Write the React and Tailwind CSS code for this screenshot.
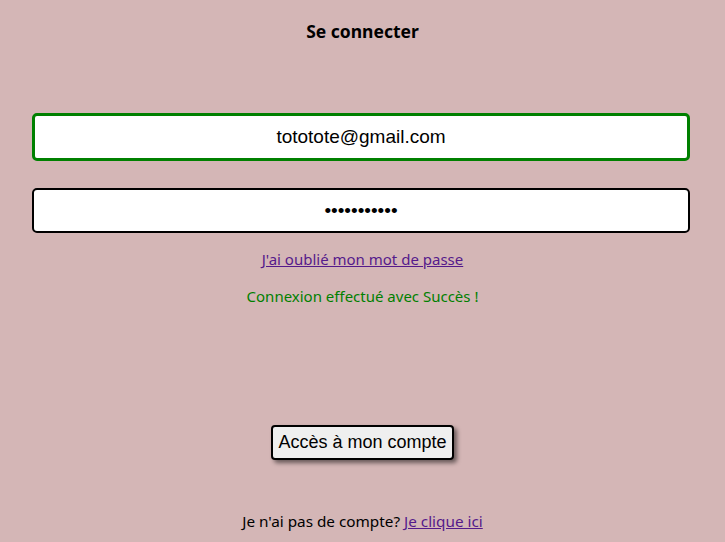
export default function App() {
  return (
    <div className="min-h-[542px] w-full bg-[#d4b6b6] flex flex-col items-center font-['Noto_Sans','Open_Sans',sans-serif] text-black">
      {/* Titre */}
      <h1 className="mt-[19px] text-[17.5px] font-bold leading-[24px]">Se connecter</h1>

      {/* Formulaire */}
      <form className="mt-[70px] w-full flex flex-col items-center">
        <input
          type="email"
          defaultValue="tototote@gmail.com"
          className="ml-[-3px] w-[658px] h-[48px] bg-white border-[3px] border-[#008000] rounded-[5px] text-center text-[19px] font-['Liberation_Sans',Arial,sans-serif] outline-none"
        />
        <input
          type="password"
          defaultValue="toto1234567"
          className="ml-[-3px] mt-[27px] w-[658px] h-[45px] bg-white border-2 border-black rounded-[5px] text-center text-[19px] font-['Liberation_Sans',Arial,sans-serif] outline-none"
        />
        <a href="#" className="mt-[16px] text-[15px] leading-[20px] text-[#551a8b] underline">
          J'ai oublié mon mot de passe
        </a>
        <p className="mt-[17px] text-[15px] leading-[20px] text-[#008000]">Connexion effectué avec Succès !</p>

        <button
          type="button"
          className="mt-[119px] h-[35px] px-[5px] bg-[#efefef] border-2 border-black rounded-[4px] text-[18px] font-['Liberation_Sans',Arial,sans-serif] shadow-[3px_3px_4px_rgba(0,0,0,0.5)]"
        >
          Accès à mon compte
        </button>
      </form>

      <p className="mt-[51px] text-[15.3px] leading-[20px]">
        Je n'ai pas de compte?{" "}
        <a href="#" className="text-[#551a8b] underline">Je clique ici</a>
      </p>
    </div>
  );
}
